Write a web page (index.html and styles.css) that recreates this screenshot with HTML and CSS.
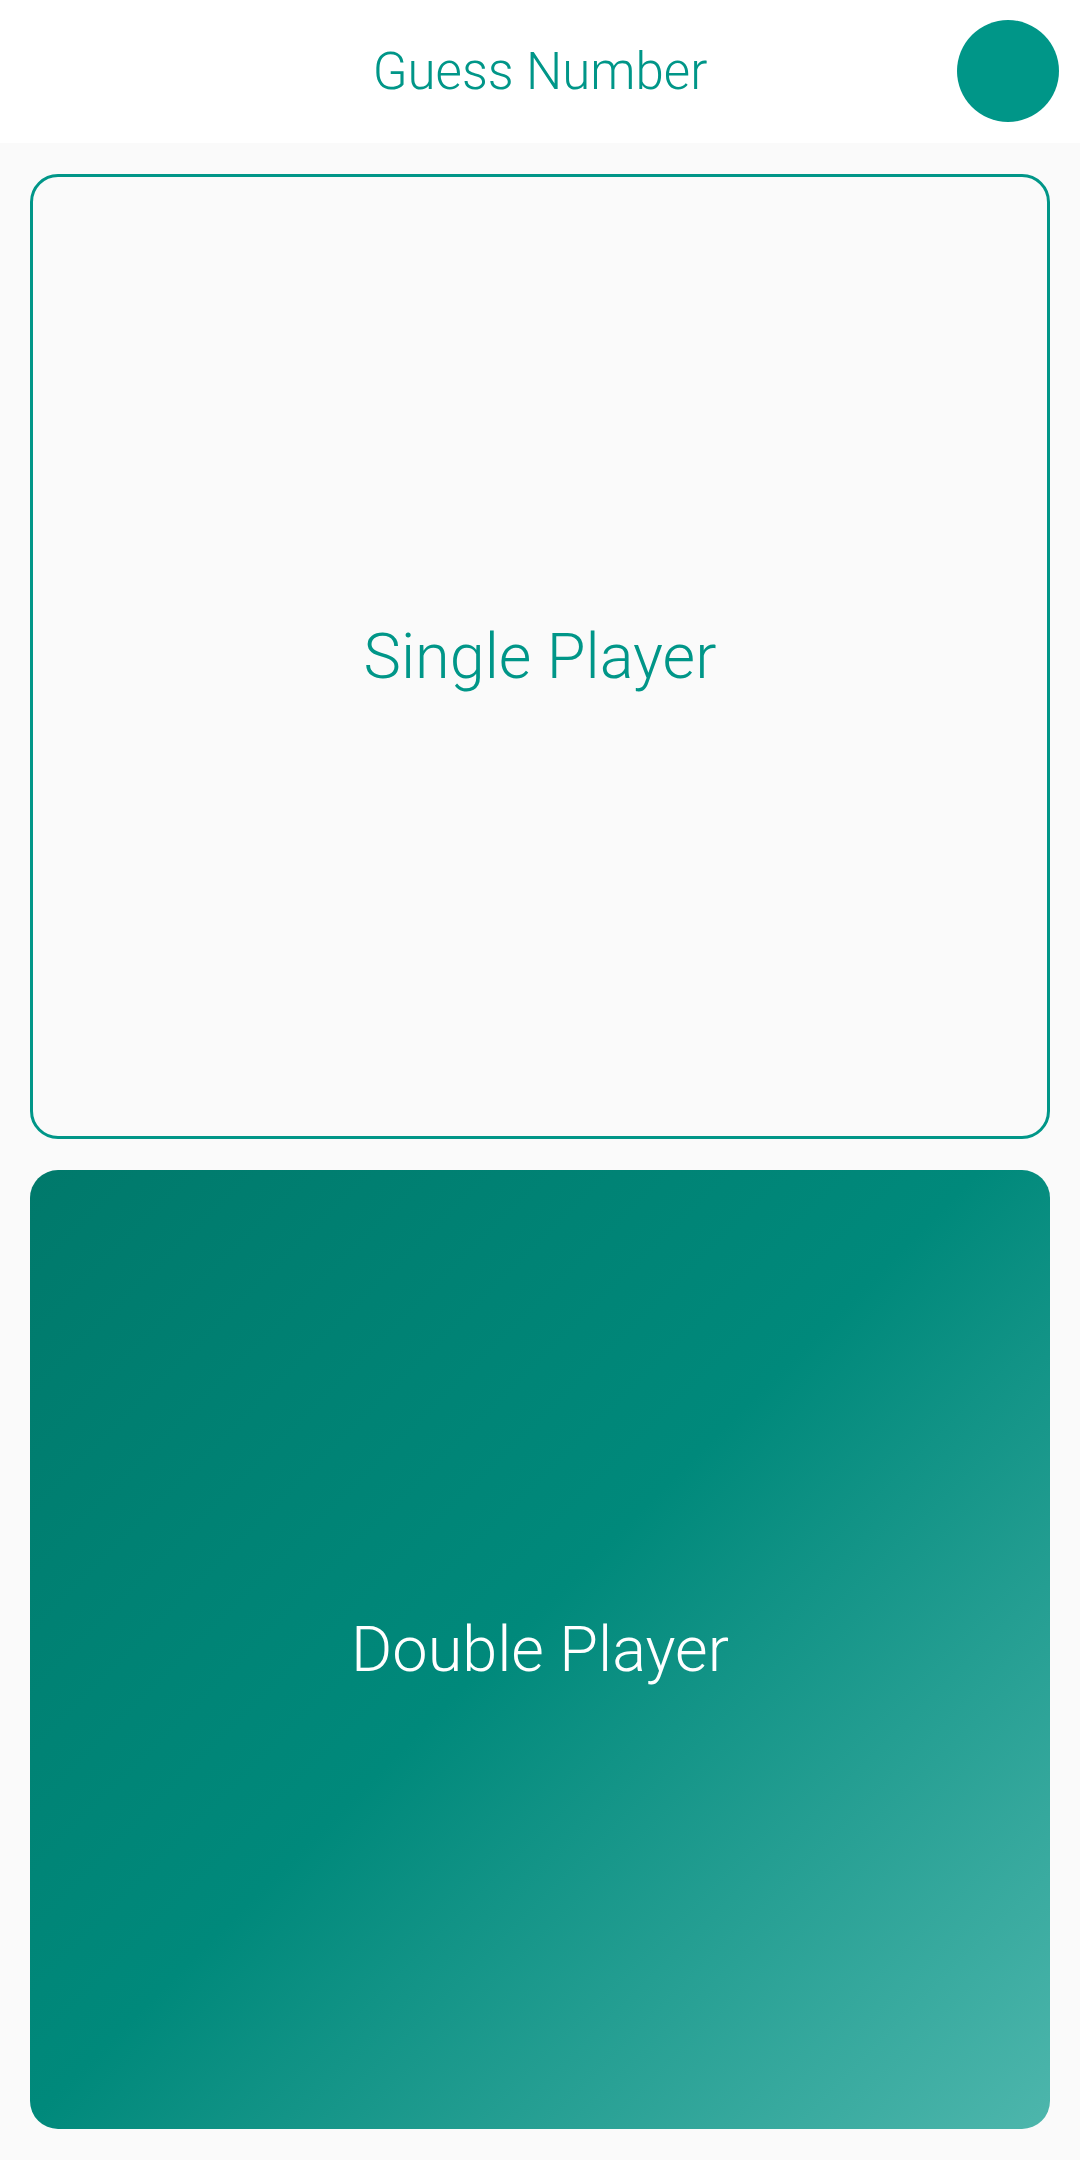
FILE: index.html
```html
<!DOCTYPE html>
<html lang="en">
<head>
<meta charset="utf-8">
<title>Guess Number</title>
<link rel="stylesheet" href="styles.css">
</head>
<body>
<div class="app">
  <header class="topbar">
    <h1 class="title">Guess Number</h1>
    <span class="avatar"></span>
  </header>
  <main class="menu">
    <button class="card card-outline">Single Player</button>
    <button class="card card-filled">Double Player</button>
  </main>
</div>
</body>
</html>
```

FILE: styles.css
```css
* { box-sizing: border-box; }
html, body { margin: 0; padding: 0; }
body {
  width: 1080px;
  height: 2160px;
  background: #fafafa;
  font-family: Roboto, "Noto Sans", sans-serif;
}
.app {
  display: flex;
  flex-direction: column;
  height: 2160px;
}
.topbar {
  position: relative;
  height: 143px;
  flex: 0 0 143px;
  background: #ffffff;
  display: flex;
  align-items: center;
  justify-content: center;
}
.title {
  margin: 0;
  font-size: 51px;
  font-weight: 300;
  color: #009688;
  line-height: 1;
}
.avatar {
  position: absolute;
  right: 21px;
  top: 20px;
  width: 102px;
  height: 102px;
  border-radius: 50%;
  background: #009688;
}
.menu {
  flex: 1;
  display: flex;
  flex-direction: column;
  gap: 31px;
  padding: 31px 30px;
}
.card {
  flex: 1;
  display: flex;
  align-items: center;
  justify-content: center;
  border-radius: 28px;
  font-family: Roboto, "Noto Sans", sans-serif;
  font-size: 63px;
  font-weight: 300;
  cursor: pointer;
  padding: 0;
  width: 100%;
}
.card-outline {
  background: #fafafa;
  border: 3px solid #009688;
  color: #009688;
}
.card-filled {
  border: none;
  color: #ffffff;
  background: linear-gradient(135deg, #00796b 0%, #00897b 48%, #4db6ac 100%);
}
```
